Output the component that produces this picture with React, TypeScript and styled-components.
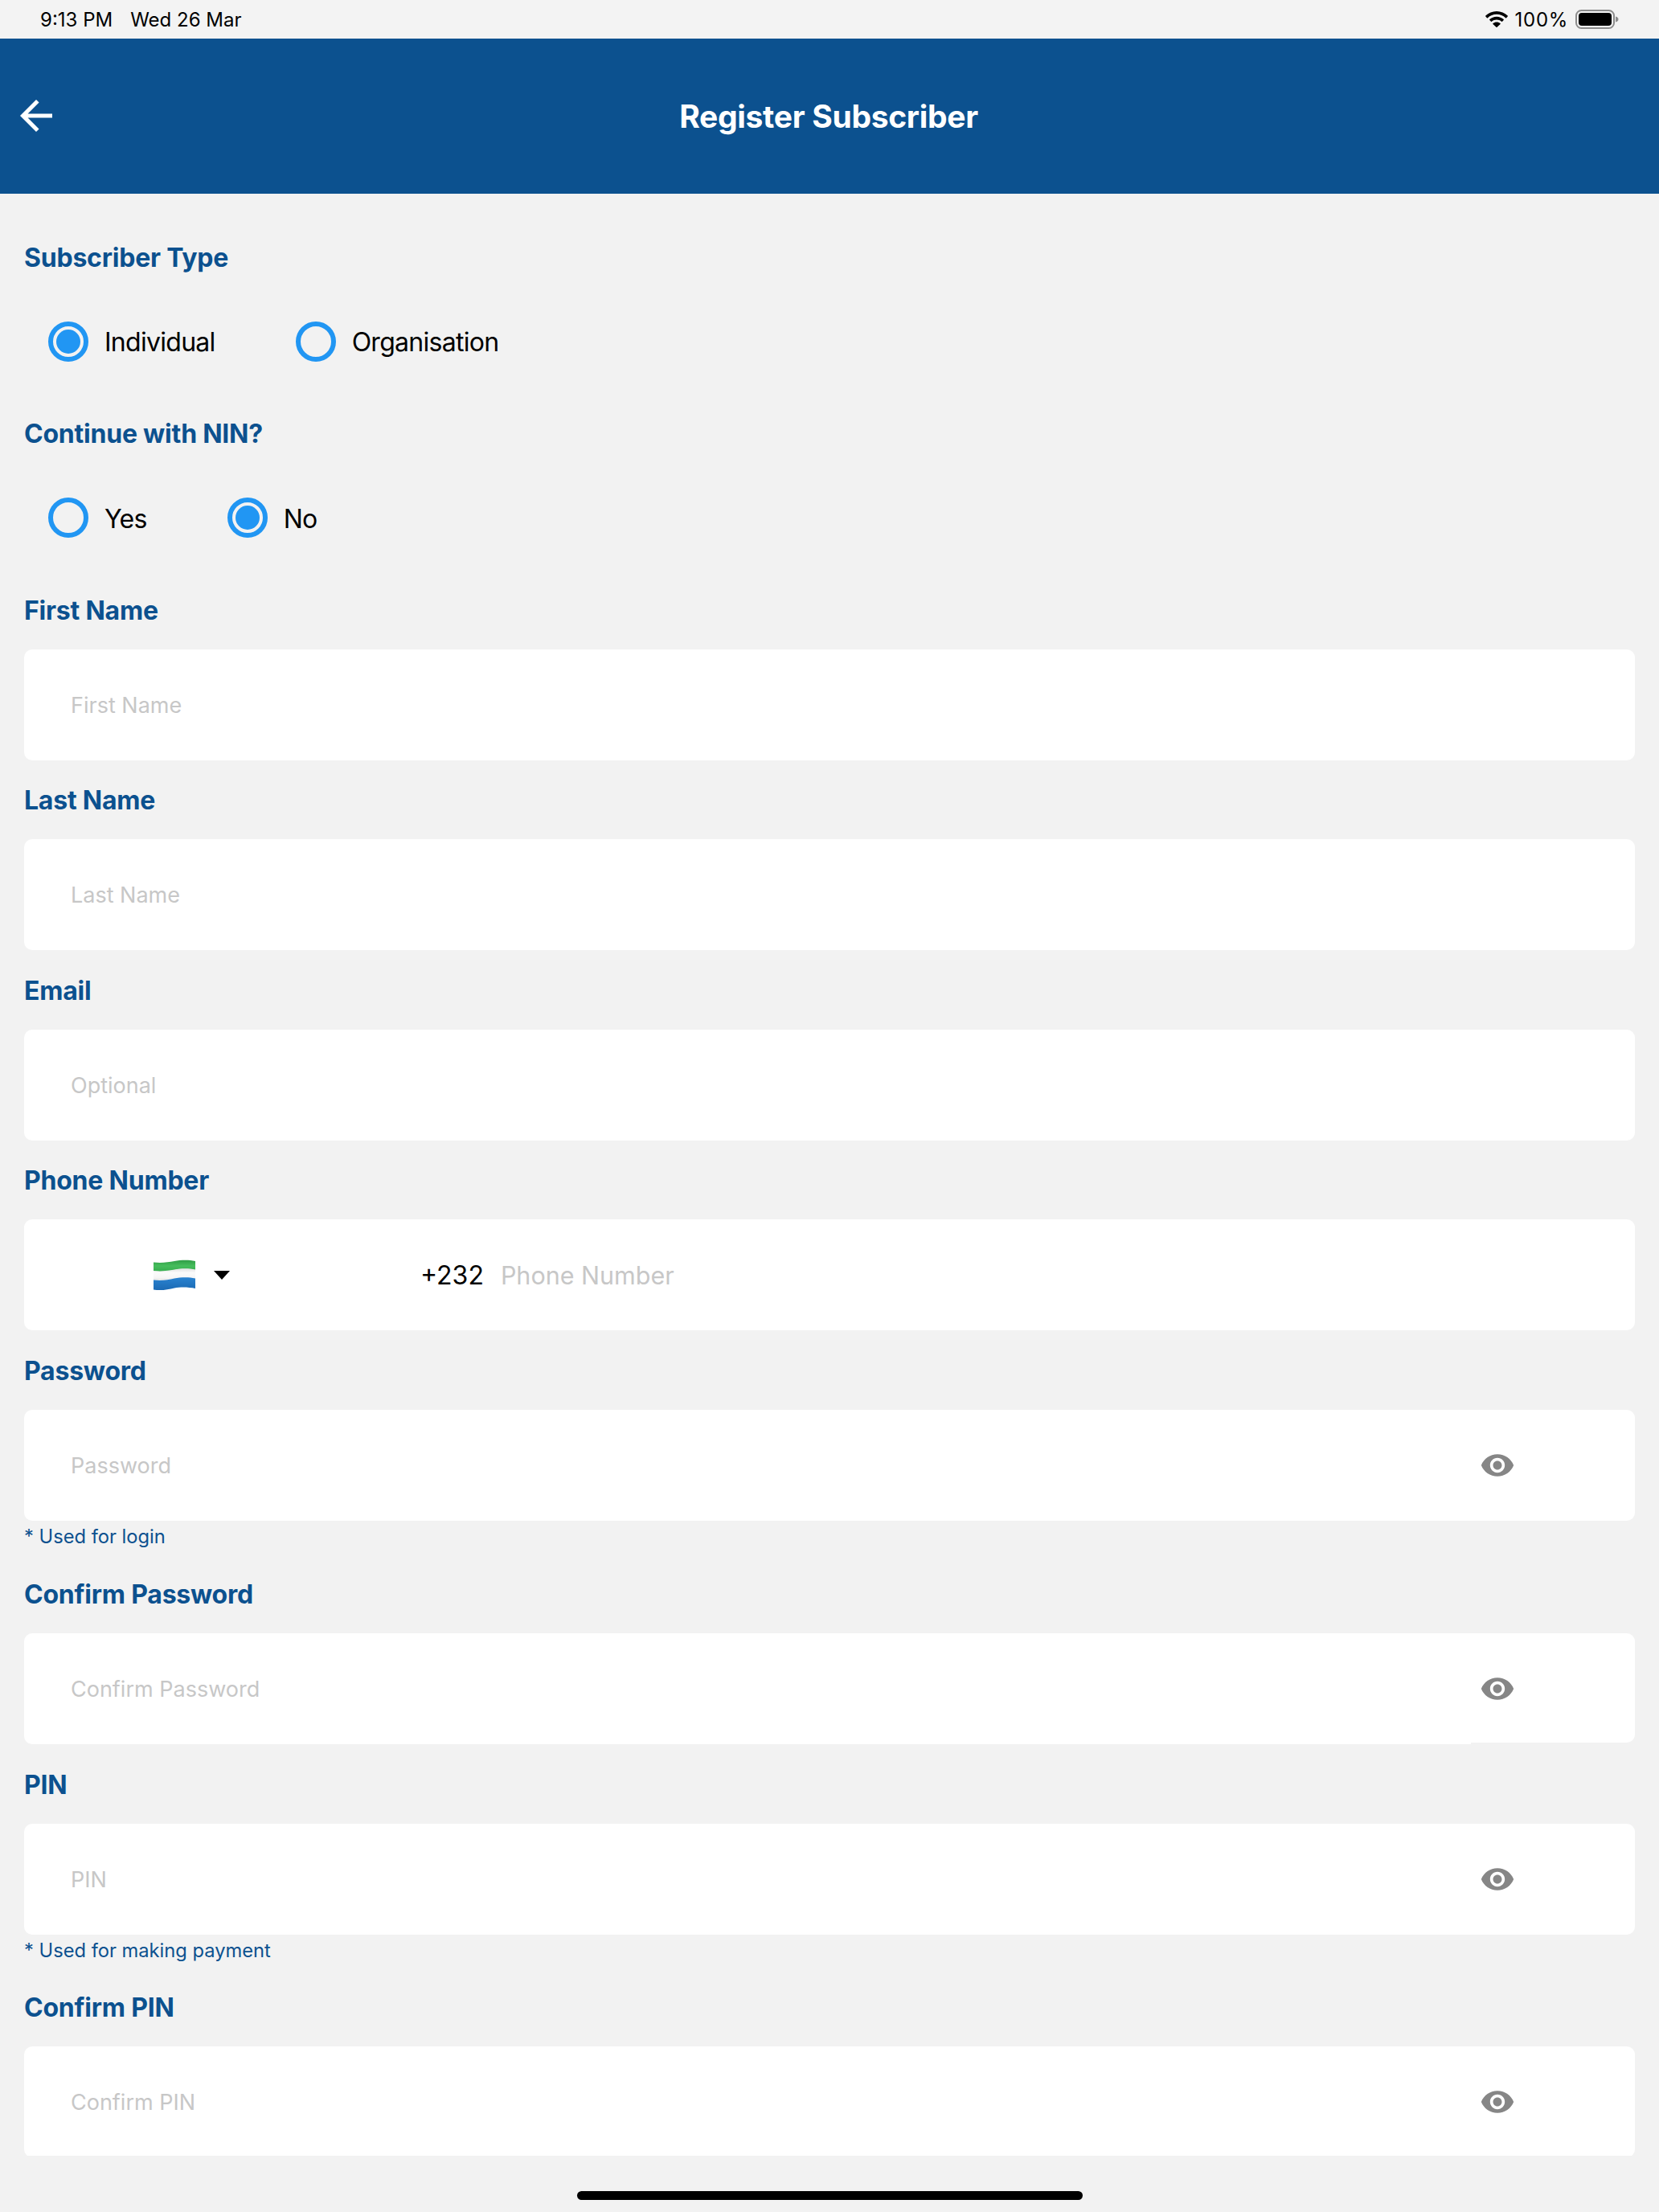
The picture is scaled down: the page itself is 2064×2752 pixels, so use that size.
import React from "react";
import styled, { createGlobalStyle } from "styled-components";
import { MdArrowBack, MdVisibility } from "react-icons/md";

const Global = createGlobalStyle`
  html, body { margin: 0; padding: 0; background: #f2f2f2; }
  * { box-sizing: border-box; }
  #root { width: 2064px; height: 2752px; }
`;

const NAVY = "#0c518f";
const FONT = `Inter, "Liberation Sans", sans-serif`;

const Screen = styled.div`
  width: 2064px;
  height: 2752px;
  display: flex;
  flex-direction: column;
  background: #f2f2f2;
  font-family: ${FONT};
  overflow: hidden;
`;

const StatusBar = styled.div`
  height: 48px;
  flex: none;
  display: flex;
  align-items: center;
  justify-content: space-between;
  padding: 0 50px;
  font-size: 24px;
  color: #000;
  background: #f3f3f3;
`;
const StatusLeft = styled.div`
  display: flex;
  gap: 22px;
`;
const StatusRight = styled.div`
  display: flex;
  align-items: center;
  gap: 9px;
`;
const BatteryLevel = styled.span`
  letter-spacing: 0.7px;
`;
const Header = styled.header`
  height: 193px;
  flex: none;
  position: relative;
  display: flex;
  align-items: center;
  justify-content: center;
  padding-right: 2px;
  background: ${NAVY};
`;
const BackIcon = styled(MdArrowBack)`
  position: absolute;
  left: 15px;
  top: 66px;
  color: #fff;
`;
const Title = styled.h1`
  margin: 0;
  font-size: 39px;
  font-weight: 700;
  letter-spacing: -0.3px;
  color: #fff;
  line-height: 1;
`;
const Content = styled.main`
  height: 2441px;
  flex: none;
  overflow: hidden;
  padding: 29.25px 30px 0;
`;
const Label = styled.div`
  height: 98.5px;
  padding-top: 1.5px;
  display: flex;
  align-items: center;
  font-size: 32px;
  font-weight: 700;
  letter-spacing: -0.22px;
  color: ${NAVY};
`;
const RadioRow = styled.div`
  height: 112px;
  margin-bottom: 9px;
  padding-left: 30px;
  display: flex;
  align-items: center;
  gap: 100px;
`;
const RadioItem = styled.div`
  display: flex;
  align-items: center;
  gap: 20px;
  font-size: 32px;
  letter-spacing: -0.72px;
  color: #000;
`;
const RadioText = styled.span`
  padding-top: 2px;
`;
const RadioCircle = styled.span<{ $on?: boolean }>`
  width: 50px;
  height: 50px;
  flex: none;
  border-radius: 50%;
  border: 6px solid #2196f3;
  display: flex;
  align-items: center;
  justify-content: center;
  &::after {
    content: "";
    width: 30px;
    height: 30px;
    border-radius: 50%;
    background: ${(p) => (p.$on ? "#2196f3" : "transparent")};
  }
`;
const Field = styled.div`
  height: 138px;
  display: flex;
  align-items: flex-start;
`;
const FieldBody = styled.div`
  flex: 1;
  height: 138px;
  display: flex;
  align-items: center;
  padding-left: 58px;
  padding-top: 1px;
  background: #fff;
  border-radius: 10px 0 0 10px;
`;
const FullFieldBody = styled(FieldBody)`
  border-radius: 10px;
`;
const Placeholder = styled.span<{ $large?: boolean }>`
  font-size: ${(p) => (p.$large ? "30.5px" : "27px")};
  color: #c7c7c7;
`;
const EyeCell = styled.div<{ $short?: boolean }>`
  width: 204px;
  height: ${(p) => (p.$short ? "136px" : "138px")};
  flex: none;
  display: flex;
  align-items: ${(p) => (p.$short ? "flex-start" : "center")};
  padding-left: 11px;
  padding-top: ${(p) => (p.$short ? "47px" : "0")};
  background: #fff;
  border-radius: 0 10px 10px 0;
  color: #868686;
`;
const PhoneBody = styled(FullFieldBody)`
  padding-left: 161px;
`;
const CountryPicker = styled.div`
  width: 332px;
  flex: none;
  display: flex;
  align-items: center;
  gap: 23px;
`;
const Caret = styled.span`
  width: 0;
  height: 0;
  border-left: 10px solid transparent;
  border-right: 10px solid transparent;
  border-top: 11px solid #000;
`;
const DialCode = styled.span`
  font-size: 32px;
  color: #000;
  margin-right: 21px;
`;
const Hint = styled.div<{ $tight?: boolean }>`
  height: ${(p) => (p.$tight ? "41px" : "42px")};
  display: flex;
  align-items: center;
  font-size: 23.7px;
  color: ${NAVY};
  padding-bottom: 2px;
`;
const HomeBar = styled.div`
  flex: 1;
  display: flex;
  justify-content: center;
  padding-top: 44px;
  &::after {
    content: "";
    width: 629px;
    height: 11px;
    border-radius: 6px;
    background: #000;
  }
`;

const Flag = () => (
  <svg width="52" height="39" viewBox="0 0 52 39">
    <defs>
      <linearGradient id="white" x1="0" x2="0" y1="0" y2="1">
        <stop offset="0" stopColor="#e2e2e2" />
        <stop offset=".35" stopColor="#fbfbfb" />
        <stop offset=".75" stopColor="#f6f6f6" />
        <stop offset="1" stopColor="#e4e4e4" />
      </linearGradient>
      <linearGradient id="green" x1="0" x2="0" y1="0" y2="1">
        <stop offset="0" stopColor="#2f9d46" />
        <stop offset=".5" stopColor="#46bd5c" />
        <stop offset="1" stopColor="#37ad4f" />
      </linearGradient>
      <linearGradient id="blue" x1="0" x2="0" y1="0" y2="1">
        <stop offset="0" stopColor="#2a83d0" />
        <stop offset="1" stopColor="#1b6ab4" />
      </linearGradient>
    </defs>
    <path d="M0 3.500C10 4.500 18 3.500 26 2 33 .8 43 0 52 2V13C43 11 33 11.500 26 13 18 14.500 10 15.500 0 14.500Z" fill="url(#green)" />
    <path d="M0 14C10 15 18 14 26 12.500 33 11.300 43 10.500 52 12.500V24C43 22 33 22.500 26 24 18 25.500 10 26.500 0 26Z" fill="url(#white)" />
    <path d="M0 25.500C10 26.500 18 25.500 26 23.500 33 22.300 43 21.500 52 23.500V36C43 34 33 34 26 35.500 18 37.500 9 39 0 37.500Z" fill="url(#blue)" />
  </svg>
);

const Wifi = () => (
  <svg width="28" height="20" viewBox="0 0 28 20">
    <path d="M14 0C8.700 0 3.900 2.100.3 5.600c-.3.3-.3.6 0 .9l1.600 1.700c.3.3.7.3 1 0C5.800 5.400 9.700 3.700 14 3.700s8.200 1.700 11.100 4.500c.3.3.7.3 1 0l1.600-1.700c.3-.3.3-.6 0-.9C24.100 2.100 19.300 0 14 0Z" fill="#000" />
    <path d="M14 6.700c-3.300 0-6.400 1.300-8.700 3.400-.3.3-.3.6 0 .9l1.700 1.700c.3.3.6.3.9 0 1.600-1.400 3.800-2.300 6.100-2.300s4.500.9 6.100 2.300c.3.3.6.3.9 0l1.700-1.700c.3-.3.3-.6 0-.9-2.300-2.100-5.400-3.400-8.700-3.400Z" fill="#000" />
    <path d="M14 13.500c-1.800 0-3.400.7-4.600 1.700-.3.3-.3.6 0 .9l4.100 3.700c.3.3.7.3 1 0l4.100-3.700c.3-.3.3-.6 0-.9-1.200-1-2.800-1.700-4.600-1.700Z" fill="#000" />
  </svg>
);

const Battery = () => (
  <svg width="54" height="24" viewBox="0 0 54 24">
    <rect x="1" y="1" width="47" height="22" rx="6.500" fill="none" stroke="#8c8c8c" strokeWidth="2" />
    <rect x="4" y="4" width="41" height="16" rx="4" fill="#000" />
    <path d="M50 8.500c2 .4 3.500 1.800 3.500 3.500s-1.500 3.100-3.500 3.500Z" fill="#8c8c8c" />
  </svg>
);

const TextField = ({ placeholder }: { placeholder: string }) => (
  <Field>
    <FullFieldBody>
      <Placeholder>{placeholder}</Placeholder>
    </FullFieldBody>
  </Field>
);

const SecretField = ({ placeholder, short }: { placeholder: string; short?: boolean }) => (
  <Field>
    <FieldBody>
      <Placeholder>{placeholder}</Placeholder>
    </FieldBody>
    <EyeCell $short={short}>
      <MdVisibility size={44} />
    </EyeCell>
  </Field>
);

const Radio = ({ on, children }: { on?: boolean; children: React.ReactNode }) => (
  <RadioItem>
    <RadioCircle $on={on} />
    <RadioText>{children}</RadioText>
  </RadioItem>
);

export default function App() {
  return (
    <Screen>
      <Global />
      <StatusBar>
        <StatusLeft>
          <span>9:13 PM</span>
          <span>Wed 26 Mar</span>
        </StatusLeft>
        <StatusRight>
          <Wifi />
          <BatteryLevel>100%</BatteryLevel>
          <Battery />
        </StatusRight>
      </StatusBar>
      <Header>
        <BackIcon size={60} />
        <Title>Register Subscriber</Title>
      </Header>
      <Content>
        <Label>Subscriber Type</Label>
        <RadioRow>
          <Radio on>Individual</Radio>
          <Radio>Organisation</Radio>
        </RadioRow>
        <Label>Continue with NIN?</Label>
        <RadioRow>
          <Radio>Yes</Radio>
          <Radio on>No</Radio>
        </RadioRow>
        <Label>First Name</Label>
        <TextField placeholder="First Name" />
        <Label>Last Name</Label>
        <TextField placeholder="Last Name" />
        <Label>Email</Label>
        <TextField placeholder="Optional" />
        <Label>Phone Number</Label>
        <Field>
          <PhoneBody>
            <CountryPicker>
              <Flag />
              <Caret />
            </CountryPicker>
            <DialCode>+232</DialCode>
            <Placeholder $large>Phone Number</Placeholder>
          </PhoneBody>
        </Field>
        <Label>Password</Label>
        <SecretField placeholder="Password" />
        <Hint>* Used for login</Hint>
        <Label>Confirm Password</Label>
        <SecretField placeholder="Confirm Password" short />
        <Label>PIN</Label>
        <SecretField placeholder="PIN" />
        <Hint $tight>* Used for making payment</Hint>
        <Label>Confirm PIN</Label>
        <SecretField placeholder="Confirm PIN" />
      </Content>
      <HomeBar />
    </Screen>
  );
}
